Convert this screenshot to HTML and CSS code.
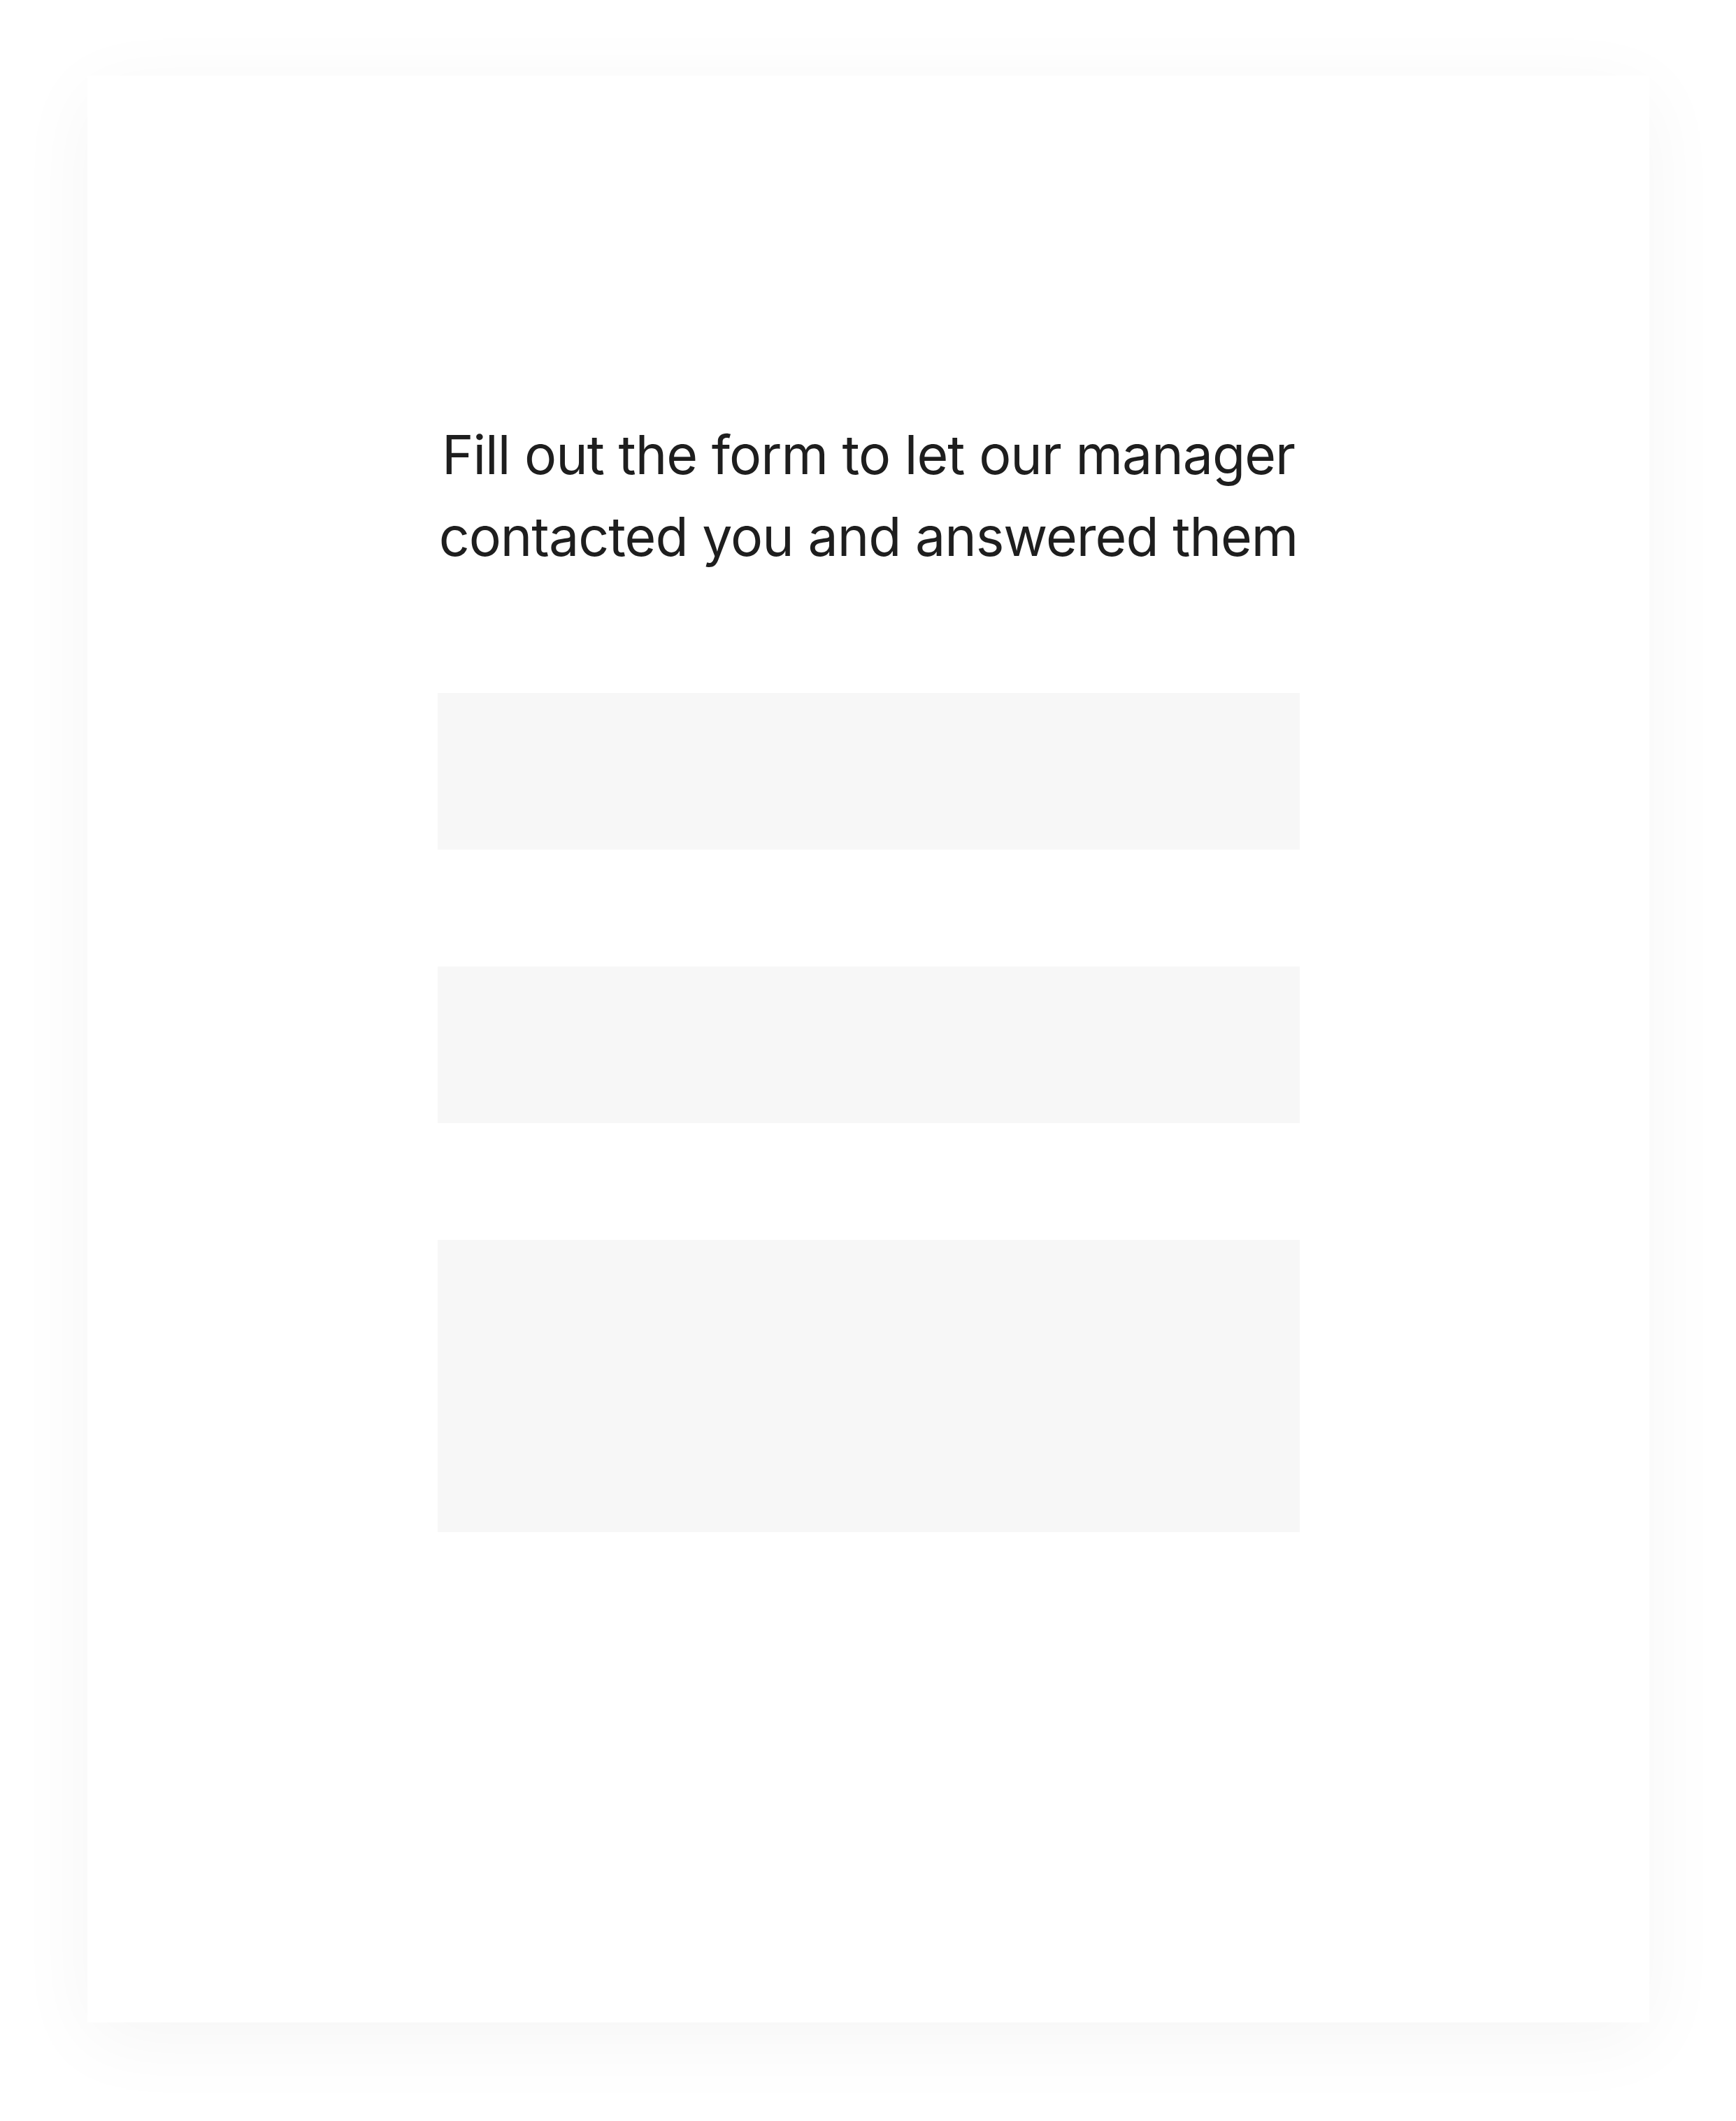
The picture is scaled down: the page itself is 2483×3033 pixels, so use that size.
FILE: index.html
```html
<!DOCTYPE html>
<html lang="en">
<head>
<meta charset="utf-8">
<title>Contact form</title>
<link rel="stylesheet" href="styles.css">
</head>
<body>
<div class="page">
  <main class="card">
    <div class="form">
      <h1 class="title">Fill out the form to let our manager contacted you and answered them</h1>
      <div class="fields">
        <div class="field"></div>
        <div class="field"></div>
        <div class="field field-tall"></div>
      </div>
    </div>
  </main>
</div>
</body>
</html>
```

FILE: styles.css
```css
html, body {
  margin: 0;
  padding: 0;
  background: #ffffff;
}

body {
  font-family: Inter, "Noto Sans", sans-serif;
}

.page {
  box-sizing: border-box;
  width: 2483px;
  height: 3033px;
  padding: 108px 124px 141px 125px;
}

.card {
  box-sizing: border-box;
  height: 100%;
  background: #ffffff;
  box-shadow: 0 24px 110px rgba(0, 0, 0, 0.045);
  display: flex;
  justify-content: center;
  padding-top: 484px;
}

.form {
  width: 1233px;
  display: flex;
  flex-direction: column;
}

.title {
  margin: 0 -10px;
  font-size: 77px;
  line-height: 117px;
  font-weight: 400;
  color: #1e1e1e;
  text-align: center;
  letter-spacing: -1px;
}

.fields {
  margin-top: 165px;
  display: flex;
  flex-direction: column;
  gap: 167px;
}

.field {
  height: 224px;
  background: #f7f7f7;
}

.field-tall {
  height: 418px;
}
```
